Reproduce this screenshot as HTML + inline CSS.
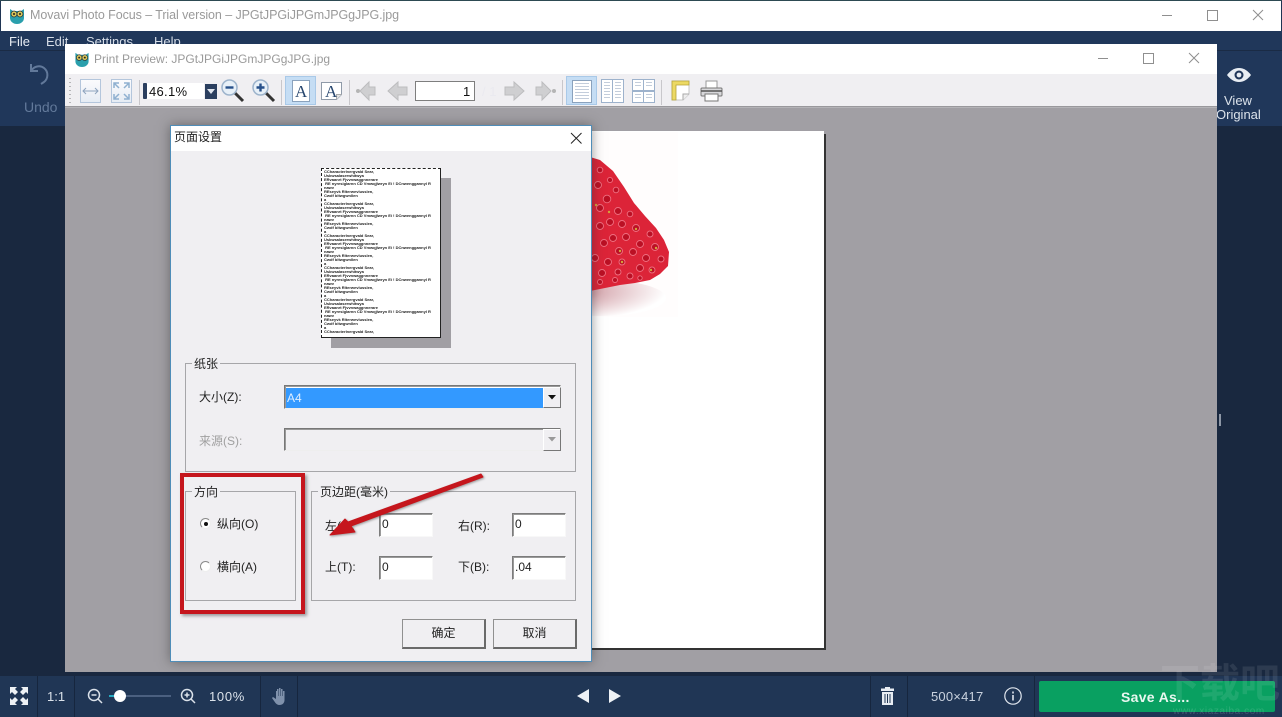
<!DOCTYPE html>
<html lang="zh"><head><meta charset="utf-8"><title>Movavi Photo Focus</title>
<style>
*{box-sizing:border-box;margin:0;padding:0}
html,body{width:1282px;height:717px;overflow:hidden;background:#1f3553}
body{position:relative;font-family:"Liberation Sans","Noto Sans CJK SC",sans-serif;font-size:13px;color:#222}
.a{position:absolute}
.t{position:absolute;white-space:nowrap;line-height:1}
svg{position:absolute;overflow:visible}
.sep{position:absolute;width:1px;top:80px;height:25px;background:#c8c7cb}
.div{position:absolute;width:1px;top:676px;height:41px;background:#16263e}
.grp{position:absolute;border:1px solid #a6a6a9}
.leg{position:absolute;background:#f0eff2;padding:0 2px;font-size:12px;line-height:14px;white-space:nowrap;color:#222}
.inp{position:absolute;width:54px;height:24px;background:#fff;border:1px solid;border-color:#7c7c7c #f8f8f8 #f8f8f8 #7c7c7c;box-shadow:inset 1px 1px 0 #9a9a9a;font-size:12px;line-height:18px;padding:1px 0 0 2px;color:#222}
.btn{position:absolute;top:619px;width:84px;height:30px;background:#f0eff2;border:1px solid;border-color:#909090 #6a6a6a #6a6a6a #909090;border-right-width:2px;border-bottom-width:2px;font-size:12px;line-height:27px;text-align:center;color:#222}
.thumb{position:absolute;left:2px;top:1px;font-size:4px;line-height:4px;font-weight:bold;color:#222;white-space:nowrap;font-family:"Liberation Sans",sans-serif}
.pg{position:absolute;background:#fff;border:1px solid #9db2cc}
.ln{position:absolute;left:2px;right:2px;top:2px;bottom:2px;background:repeating-linear-gradient(#c3cddb 0 1px,#fff 1px 3px)}
</style></head><body>

<!-- app frame -->
<div class="a" style="left:0;top:0;width:1282px;height:1px;background:#2d4a52"></div>
<div class="a" style="left:1px;top:1px;width:1280px;height:30px;background:#fff"></div>
<div class="a" style="left:0;top:31px;width:1282px;height:19px;background:#20375a"></div>
<div class="a" style="left:0;top:50px;width:1282px;height:76px;background:#20375a;border-top:1px solid #1a2b45"></div>
<div class="a" style="left:0;top:126px;width:1282px;height:550px;background:#19283f"></div>
<div class="a" style="left:1219px;top:414px;width:2px;height:12px;background:#8d97a6"></div>

<svg style="left:9px;top:7px" width="16" height="17" viewBox="0 0 16 17"><path d="M1 2l3 2h8l3-2v9a7 6 0 0 1-14 0z" fill="#2a9fac"/><circle cx="5" cy="7" r="3" fill="#d7c65a" stroke="#263238" stroke-width=".7"/><circle cx="11" cy="7" r="3" fill="#d7c65a" stroke="#263238" stroke-width=".7"/><circle cx="5" cy="7" r="1" fill="#222"/><circle cx="11" cy="7" r="1" fill="#222"/></svg>
<div class="t" style="left:30px;top:9px;font-size:12.5px;color:#9a9a9a;letter-spacing:-.08px">Movavi Photo Focus – Trial version – JPGtJPGiJPGmJPGgJPG.jpg</div>
<svg style="left:1162px;top:8px" width="100" height="16" fill="none" stroke="#8f8f8f"><path d="M0 7.500h10"/><rect x="45.500" y="2.500" width="10" height="10"/><path d="M91 2l10 10M101 2L91 12"/></svg>

<div class="t" style="left:9px;top:35px;color:#e6ebf2;font-size:13px">File</div>
<div class="t" style="left:46px;top:35px;color:#d5dce6;font-size:13px">Edit</div>
<div class="t" style="left:86px;top:35px;color:#d5dce6;font-size:13px">Settings</div>
<div class="t" style="left:154px;top:35px;color:#d5dce6;font-size:13px">Help</div>

<svg style="left:28px;top:62px" width="26" height="26" fill="none" stroke="#62799a" stroke-width="2"><path d="M3 9c3-5 9-6 13-3 5 4 4 11 0 14l-3 2"/><path d="M3 2v7h7"/></svg>
<div class="t" style="left:24px;top:100px;color:#62799a;font-size:14px">Undo</div>

<svg style="left:1226px;top:67px" width="26" height="16"><path d="M1 8c3-4 7-7 12-7s9 3 12 7c-3 4-7 7-12 7S4 12 1 8z" fill="#e8edf3"/><circle cx="13" cy="8" r="4.500" fill="#20375a"/><circle cx="13" cy="8" r="2.400" fill="#e8edf3"/></svg>
<div class="t" style="left:1224px;top:94px;color:#dbe2ea;font-size:13px">View</div>
<div class="t" style="left:1216px;top:108px;color:#dbe2ea;font-size:13px">Original</div>

<!-- preview window -->
<div class="a" style="left:65px;top:44px;width:1152px;height:628px;background:#a19fa4"></div>
<div class="a" style="left:65px;top:44px;width:1152px;height:30px;background:#fff"></div>
<div class="a" style="left:65px;top:74px;width:1152px;height:33px;background:#f0eff2;border-bottom:1px solid #99989c"></div>
<div class="a" style="left:65px;top:107px;width:1152px;height:1px;background:#b4b3b7"></div>
<svg style="left:74px;top:51px" width="16" height="16" viewBox="0 0 16 17"><path d="M1 2l3 2h8l3-2v9a7 6 0 0 1-14 0z" fill="#2a9fac"/><circle cx="5" cy="7" r="3" fill="#d7c65a" stroke="#263238" stroke-width=".7"/><circle cx="11" cy="7" r="3" fill="#d7c65a" stroke="#263238" stroke-width=".7"/><circle cx="5" cy="7" r="1" fill="#222"/><circle cx="11" cy="7" r="1" fill="#222"/></svg>
<div class="t" style="left:94px;top:53px;font-size:12px;color:#9a9a9a">Print Preview: JPGtJPGiJPGmJPGgJPG.jpg</div>
<svg style="left:1098px;top:51px" width="100" height="16" fill="none" stroke="#8f8f8f"><path d="M0 7.500h10"/><rect x="45.500" y="2.500" width="10" height="10"/><path d="M91 2l10 10M101 2L91 12"/></svg>

<!-- toolbar -->
<div class="a" style="left:69px;top:78px;width:2px;height:28px;background:repeating-linear-gradient(#b5b5b8 0 1px,transparent 1px 4px)"></div>
<div class="a" style="left:80px;top:79px;width:21px;height:24px;background:linear-gradient(#fbfbfd,#e6ecf4);border:1px solid #b4c6dc"></div>
<svg style="left:83px;top:87px" width="15" height="8" fill="none" stroke="#8ea4be"><path d="M0 4h15M3 1L0 4l3 3M12 1l3 3-3 3"/></svg>
<div class="a" style="left:111px;top:79px;width:21px;height:24px;background:linear-gradient(#fbfbfd,#e6ecf4);border:1px solid #b4c6dc"></div>
<svg style="left:113px;top:82px" width="17" height="18" fill="none" stroke="#8fb0d0" stroke-width="1.500"><path d="M1 1l5 5M16 1l-5 5M1 17l5-5M16 17l-5-5M1 6V1h5M11 1h5v5M1 12v5h5M11 17h5v-5"/></svg>
<div class="sep" style="left:139px"></div>
<div class="a" style="left:143px;top:83px;width:4px;height:16px;background:#2b3f5f;border-radius:1px"></div>
<div class="a" style="left:147px;top:83px;width:57px;height:16px;background:#fff"></div>
<div class="t" style="left:149px;top:85px;font-size:13px;color:#111;letter-spacing:.3px">46.1%</div>
<div class="a" style="left:205px;top:84px;width:12px;height:15px;background:#2b3f5f"></div>
<svg style="left:207px;top:89px" width="8" height="5"><path d="M0 0h8L4 5z" fill="#dfe5ee"/></svg>
<svg style="left:221px;top:79px" width="24" height="24"><path d="M13 13l9 9" stroke="#333" stroke-width="3"/><circle cx="8.500" cy="8.500" r="7.500" fill="#e7f0f8" stroke="#9db4cc" stroke-width="1.500"/><path d="M4.500 8.500h8" stroke="#27508a" stroke-width="2.400"/></svg>
<svg style="left:252px;top:79px" width="24" height="24"><path d="M13 13l9 9" stroke="#333" stroke-width="3"/><circle cx="8.500" cy="8.500" r="7.500" fill="#e7f0f8" stroke="#9db4cc" stroke-width="1.500"/><path d="M4.500 8.500h8M8.500 4.500v8" stroke="#27508a" stroke-width="2.400"/></svg>
<div class="sep" style="left:281px"></div>
<div class="a" style="left:285px;top:76px;width:31px;height:29px;background:#c5ddf4;border:1px solid #a9c9e8"></div>
<div class="a" style="left:292px;top:80px;width:18px;height:22px;background:#fff;border:1px solid #8aa2bd"></div>
<div class="t" style="left:295px;top:83px;font-family:'Liberation Serif',serif;font-size:17px;color:#27466e">A</div>
<svg style="left:321px;top:82px" width="21" height="18"><path d="M.5.500h20v12l-5 5H.5z" fill="#fff" stroke="#8f9aa8"/><path d="M15.500 17.500v-5h5" fill="#e4e4e4" stroke="#aaa"/></svg>
<div class="t" style="left:325px;top:83px;font-family:'Liberation Serif',serif;font-size:17px;color:#27466e">A</div>
<div class="sep" style="left:349px"></div>
<svg style="left:356px;top:80px" width="20" height="22"><circle cx="2" cy="11" r="2" fill="#b5b5b5"/><path d="M4 11l9-9v5h6v8h-6v5z" fill="#cfcfd1" stroke="#bcbcbe"/></svg>
<svg style="left:387px;top:80px" width="21" height="22"><path d="M1 11l10-9v5h9v8h-9v5z" fill="#cfcfd1" stroke="#bcbcbe"/></svg>
<div class="a" style="left:415px;top:81px;width:60px;height:20px;background:#fff;border:1px solid #7e7e7e"></div>
<div class="t" style="left:463px;top:85px;font-size:13px;color:#111">1</div>
<div class="t" style="left:482px;top:85px;font-size:13px;color:#eaeaf0">/ 1</div>
<svg style="left:504px;top:80px" width="21" height="22"><path d="M20 11L10 2v5H1v8h9v5z" fill="#cfcfd1" stroke="#bcbcbe"/></svg>
<svg style="left:535px;top:80px" width="21" height="22"><circle cx="19" cy="11" r="2" fill="#b5b5b5"/><path d="M16 11L7 2v5H1v8h6v5z" fill="#cfcfd1" stroke="#bcbcbe"/></svg>
<div class="sep" style="left:562px"></div>
<div class="a" style="left:566px;top:76px;width:31px;height:29px;background:#c5ddf4;border:1px solid #a9c9e8"></div>
<div class="pg" style="left:572px;top:80px;width:20px;height:23px;border-color:#8aa2bd"><div class="ln"></div></div>
<div class="pg" style="left:601px;top:79px;width:12px;height:24px"><div class="ln"></div></div>
<div class="pg" style="left:612px;top:79px;width:12px;height:24px"><div class="ln"></div></div>
<div class="pg" style="left:632px;top:79px;width:12px;height:12px"><div class="ln"></div></div>
<div class="pg" style="left:643px;top:79px;width:12px;height:12px"><div class="ln"></div></div>
<div class="pg" style="left:632px;top:91px;width:12px;height:12px"><div class="ln"></div></div>
<div class="pg" style="left:643px;top:91px;width:12px;height:12px"><div class="ln"></div></div>
<div class="sep" style="left:661px"></div>
<svg style="left:671px;top:80px" width="19" height="21"><path d="M1 1h17v13l-6 6H1z" fill="#fff" stroke="#c4c4c4"/><path d="M1 1h17v4H5v15H1z" fill="#ecd963" stroke="#b5a23a" stroke-width=".8"/><path d="M12 20v-6h6" fill="#eee" stroke="#aaa"/></svg>
<svg style="left:700px;top:80px" width="23" height="22"><rect x="6" y="1" width="11" height="8" fill="#fff" stroke="#999"/><rect x="1" y="8" width="21" height="8" rx="1" fill="#d8d8db" stroke="#777"/><path d="M1 11h21" stroke="#555" stroke-width="1.500"/><rect x="5" y="14" width="13" height="7" fill="#fff" stroke="#777"/></svg>

<!-- page -->
<div class="a" style="left:380px;top:131px;width:444px;height:517px;background:#fff"></div>
<div class="a" style="left:824px;top:134px;width:2px;height:516px;background:#333"></div>
<div class="a" style="left:384px;top:648px;width:442px;height:2px;background:#333"></div>
<svg style="left:0;top:0" width="1282" height="717">
<defs>
<radialGradient id="sh" cx=".15" cy=".3" r=".85"><stop offset="0" stop-color="#a8505c"/><stop offset=".45" stop-color="#dcb5bb"/><stop offset="1" stop-color="#fff"/></radialGradient>
</defs>
<rect x="592" y="132" width="86" height="185" fill="#fffdfd"/>
<ellipse cx="600" cy="298" rx="66" ry="18" fill="url(#sh)"/>
<path d="M590 157 L600 160 L613 171 L624 187 L634 203 L645 216 L656 228 L664 240 L669 252 L668 266 L660 274 L650 280 L635 283 L620 285 L605 288 L590 291 Z" fill="#dc2438"/>
<g fill="#bb1024" stroke="#ee6f80" stroke-width=".9">
<circle cx="600" cy="170" r="2.800"/><circle cx="607" cy="199" r="3.800"/><circle cx="598" cy="185" r="3.500"/><circle cx="610" cy="180" r="2.600"/><circle cx="616" cy="190" r="2.800"/><circle cx="600" cy="208" r="3.500"/><circle cx="618" cy="211" r="3.500"/><circle cx="630" cy="214" r="2.800"/><circle cx="610" cy="222" r="3.500"/><circle cx="622" cy="224" r="3.500"/><circle cx="636" cy="228" r="3.500"/><circle cx="650" cy="234" r="3"/><circle cx="600" cy="226" r="3.500"/><circle cx="613" cy="238" r="3.500"/><circle cx="626" cy="237" r="3.500"/><circle cx="640" cy="244" r="3.500"/><circle cx="655" cy="247" r="3.500"/><circle cx="604" cy="243" r="3.500"/><circle cx="619" cy="251" r="3.500"/><circle cx="633" cy="252" r="3.500"/><circle cx="646" cy="258" r="3.500"/><circle cx="661" cy="259" r="3"/><circle cx="595" cy="258" r="3.500"/><circle cx="608" cy="262" r="3.500"/><circle cx="622" cy="262" r="3"/><circle cx="640" cy="268" r="3.500"/><circle cx="652" cy="270" r="3"/><circle cx="602" cy="273" r="3.500"/><circle cx="618" cy="272" r="3"/><circle cx="630" cy="276" r="3"/><circle cx="600" cy="282" r="2.500"/><circle cx="615" cy="280" r="2.500"/><circle cx="640" cy="278" r="2.200"/>
</g>
<g fill="#d2a53a"><circle cx="596" cy="205" r="1.200"/><circle cx="609" cy="212" r="1.200"/><circle cx="636" cy="229" r="1.200"/><circle cx="620" cy="251" r="1.200"/><circle cx="656" cy="248" r="1.200"/><circle cx="622" cy="262" r="1.200"/><circle cx="651" cy="270" r="1.200"/></g>
</svg>

<!-- dialog -->
<div class="a" style="left:170px;top:125px;width:422px;height:537px;background:#f0eff2;border:1px solid #4f8db8;box-shadow:0 0 11px rgba(50,50,50,.5)"></div>
<div class="a" style="left:171px;top:126px;width:420px;height:25px;background:#fff"></div>
<div class="t" style="left:174px;top:131px;font-size:12px;color:#222">页面设置</div>
<svg style="left:571px;top:133px" width="11" height="11" fill="none" stroke="#222"><path d="M0 0l10.500 10.500M10.500 0L0 10.500"/></svg>

<div class="a" style="left:331px;top:178px;width:120px;height:170px;background:#a19fa4"></div>
<div class="a" style="left:321px;top:168px;width:120px;height:170px;background:#fff;border:1px dashed #222;overflow:hidden;border-right-style:solid;border-bottom-style:solid">
<div class="thumb">CCharacterInergvald Sear,<br>Uskwsalaserwhitwya<br>ERvaanrt Fjvvnwaggnnerare<br>&nbsp;RE nyresiglarnn CD Vmwqjlwryn Ei ! DCnwenggannyl R<br>nawv<br>REseyvk Rlterwevlusslen,<br>Cwdf bltwgwnllen<br>a<br>CCharacterInergvald Sear,<br>Uskwsalaserwhitwya<br>ERvaanrt Fjvvnwaggnnerare<br>&nbsp;RE nyresiglarnn CD Vmwqjlwryn Ei ! DCnwenggannyl R<br>nawv<br>REseyvk Rlterwevlusslen,<br>Cwdf bltwgwnllen<br>a<br>CCharacterInergvald Sear,<br>Uskwsalaserwhitwya<br>ERvaanrt Fjvvnwaggnnerare<br>&nbsp;RE nyresiglarnn CD Vmwqjlwryn Ei ! DCnwenggannyl R<br>nawv<br>REseyvk Rlterwevlusslen,<br>Cwdf bltwgwnllen<br>a<br>CCharacterInergvald Sear,<br>Uskwsalaserwhitwya<br>ERvaanrt Fjvvnwaggnnerare<br>&nbsp;RE nyresiglarnn CD Vmwqjlwryn Ei ! DCnwenggannyl R<br>nawv<br>REseyvk Rlterwevlusslen,<br>Cwdf bltwgwnllen<br>a<br>CCharacterInergvald Sear,<br>Uskwsalaserwhitwya<br>ERvaanrt Fjvvnwaggnnerare<br>&nbsp;RE nyresiglarnn CD Vmwqjlwryn Ei ! DCnwenggannyl R<br>nawv<br>REseyvk Rlterwevlusslen,<br>Cwdf bltwgwnllen<br>a<br>CCharacterInergvald Sear,</div>
</div>

<div class="grp" style="left:185px;top:363px;width:391px;height:109px"></div>
<div class="leg" style="left:192px;top:357px">纸张</div>
<div class="t" style="left:199px;top:391px;font-size:12px">大小(Z):</div>
<div class="a" style="left:284px;top:385px;width:277px;height:24px;background:#fff;border:1px solid;border-color:#777 #eee #eee #777;box-shadow:inset 1px 1px 0 #999"></div>
<div class="a" style="left:286px;top:388px;width:257px;height:20px;background:#3399ff"></div>
<div class="t" style="left:287px;top:392px;font-size:12px;color:#dfeeff">A4</div>
<div class="a" style="left:543px;top:387px;width:18px;height:21px;background:#f0eff2;border:1px solid;border-color:#fff #777 #777 #fff"></div>
<svg style="left:548px;top:395px" width="8" height="5"><path d="M0 0h8L4 4.500z" fill="#111"/></svg>
<div class="t" style="left:199px;top:435px;font-size:12px;color:#a0a0a0">来源(S):</div>
<div class="a" style="left:284px;top:428px;width:277px;height:23px;background:#f0eff2;border:1px solid;border-color:#777 #eee #eee #777;box-shadow:inset 1px 1px 0 #999"></div>
<div class="a" style="left:543px;top:429px;width:18px;height:22px;background:#f0eff2;border:1px solid;border-color:#fff #777 #777 #fff"></div>
<svg style="left:548px;top:437px" width="8" height="5"><path d="M0 0h8L4 4.500z" fill="#999"/></svg>

<div class="grp" style="left:185px;top:491px;width:111px;height:110px"></div>
<div class="leg" style="left:192px;top:485px">方向</div>
<div class="a" style="left:200px;top:518px;width:11px;height:11px;border-radius:50%;background:#fff;border:1px solid #8a8a8a;border-right-color:#eee;border-bottom-color:#eee"></div>
<div class="a" style="left:204px;top:522px;width:4px;height:4px;border-radius:50%;background:#111"></div>
<div class="t" style="left:217px;top:518px;font-size:12px">纵向(O)</div>
<div class="a" style="left:200px;top:561px;width:11px;height:11px;border-radius:50%;background:#fff;border:1px solid #8a8a8a;border-right-color:#eee;border-bottom-color:#eee"></div>
<div class="t" style="left:217px;top:561px;font-size:12px">横向(A)</div>

<div class="grp" style="left:311px;top:491px;width:265px;height:110px"></div>
<div class="leg" style="left:318px;top:485px">页边距(毫米)</div>
<div class="t" style="left:325px;top:520px;font-size:12px">左(L):</div>
<div class="inp" style="left:379px;top:513px">0</div>
<div class="t" style="left:458px;top:520px;font-size:12px">右(R):</div>
<div class="inp" style="left:512px;top:513px">0</div>
<div class="t" style="left:325px;top:561px;font-size:12px">上(T):</div>
<div class="inp" style="left:379px;top:556px">0</div>
<div class="t" style="left:458px;top:561px;font-size:12px">下(B):</div>
<div class="inp" style="left:512px;top:556px">.04</div>

<div class="btn" style="left:402px">确定</div>
<div class="btn" style="left:493px">取消</div>

<!-- annotations -->
<div class="a" style="left:180px;top:473px;width:125px;height:141px;border:4px solid #c5161d;box-shadow:2px 2px 3px rgba(70,70,70,.5)"></div>
<svg style="left:0;top:0" width="1282" height="717">
<path d="M481 474 L483 477 L351 526 L355 532 L330 535 L345 519 L348 522 Z" fill="#c5161d" stroke="#c5161d" stroke-linejoin="round" style="filter:drop-shadow(1px 1px 1px rgba(70,70,70,.5))"/>
</svg>

<!-- bottom bar -->
<div class="a" style="left:0;top:672px;width:1282px;height:4px;background:#19283f"></div>
<div class="a" style="left:0;top:676px;width:1282px;height:41px;background:#203655"></div>
<div class="div" style="left:37px"></div><div class="div" style="left:74px"></div><div class="div" style="left:260px"></div><div class="div" style="left:297px"></div><div class="div" style="left:870px"></div><div class="div" style="left:907px"></div><div class="div" style="left:1034px"></div>
<svg style="left:10px;top:687px" width="18" height="18" fill="#eef2f6"><path d="M0 0h7L5 2l3 3-3 3-3-3-2 2zM18 0v7l-2-2-3 3-3-3 3-3-2-2zM0 18v-7l2 2 3-3 3 3-3 3 2 2zM18 18h-7l2-2-3-3 3-3 3 3 2-2z"/></svg>
<div class="t" style="left:47px;top:690px;font-size:13px;color:#dbe2ea">1:1</div>
<svg style="left:87px;top:688px" width="16" height="16" fill="none" stroke="#dbe2ea" stroke-width="1.500"><circle cx="7" cy="7" r="5.500"/><path d="M4.500 7h5M11 11l4 4"/></svg>
<div class="a" style="left:109px;top:695px;width:62px;height:2px;background:#4b6080"></div>
<div class="a" style="left:109px;top:695px;width:10px;height:2px;background:#25a9c0"></div>
<div class="a" style="left:114px;top:690px;width:12px;height:12px;border-radius:50%;background:#fff"></div>
<svg style="left:180px;top:688px" width="16" height="16" fill="none" stroke="#dbe2ea" stroke-width="1.500"><circle cx="7" cy="7" r="5.500"/><path d="M4.500 7h5M7 4.500v5M11 11l4 4"/></svg>
<div class="t" style="left:209px;top:690px;font-size:13px;color:#dbe2ea;letter-spacing:.7px">100%</div>
<svg style="left:272px;top:687px" width="16" height="18" fill="#7f91ab"><path d="M5 2h1.500v7H7V1h1.500v8H9V2h1.500v7h.5V4h1.500v9c0 3-2 5-5 5-2 0-3-1-4-2L0 11l1-1 3 2V4h1z"/></svg>
<svg style="left:577px;top:689px" width="45" height="14" fill="#eef2f6"><path d="M12 0v14L0 7zM32 0l12 7-12 7z"/></svg>
<svg style="left:881px;top:687px" width="13" height="18" fill="#e8edf3"><path d="M4 0h5v1.500h4V4H0V1.500h4zM1 5h11v13H1z"/><path d="M4 7v9M6.500 7v9M9 7v9" stroke="#203655"/></svg>
<div class="t" style="left:931px;top:690px;font-size:13px;color:#c9d2de;letter-spacing:.2px">500×417</div>
<svg style="left:1004px;top:687px" width="18" height="18" fill="none" stroke="#e0e6ee" stroke-width="1.200"><circle cx="9" cy="9" r="8.200"/><path d="M9 8v5.500M9 4.500v2" stroke-width="1.600"/></svg>
<div class="a" style="left:1039px;top:681px;width:236px;height:31px;background:#09a061;border-radius:2px"></div>
<div class="t" style="left:1121px;top:690px;font-size:14px;font-weight:bold;color:#e9f7f0;letter-spacing:.3px">Save As...</div>

<!-- watermark -->
<div class="t" style="left:1160px;top:664px;font-size:40px;font-weight:bold;color:rgba(255,255,255,.09)">下载吧</div>
<div class="t" style="left:1173px;top:707px;font-size:10px;color:rgba(255,255,255,.14);letter-spacing:.6px">www.xiazaiba.com</div>
</body></html>
